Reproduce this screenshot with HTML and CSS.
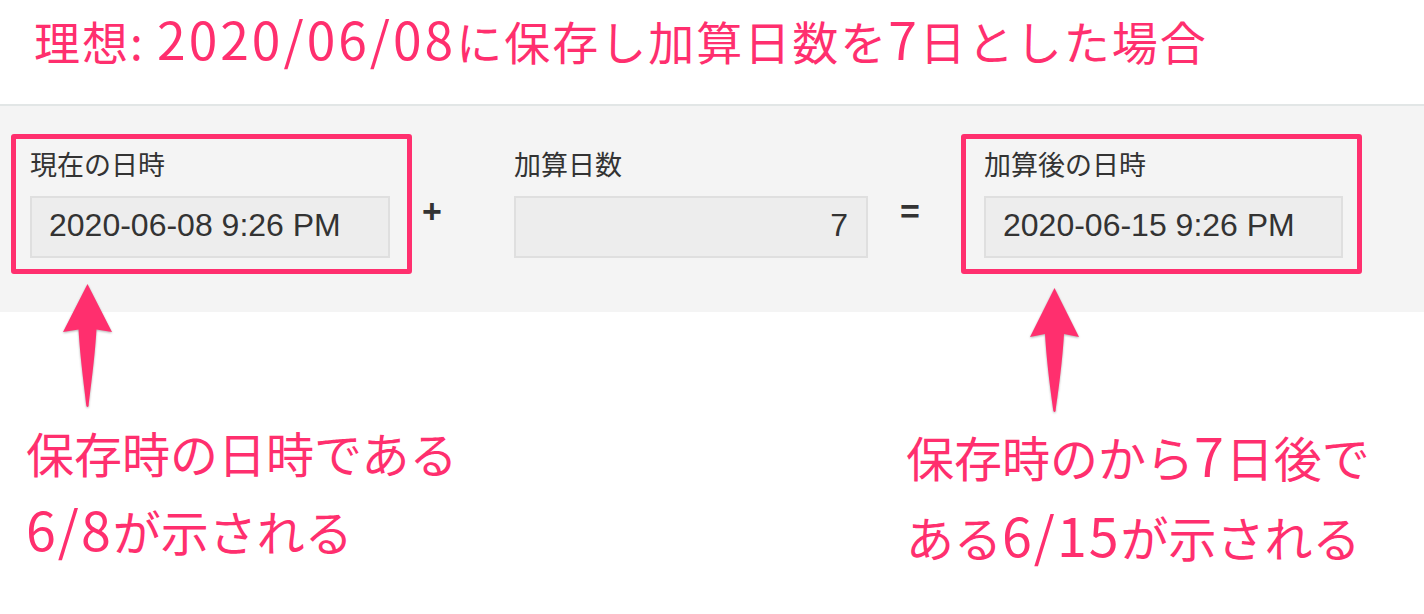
FILE: index.html
```html
<!DOCTYPE html>
<html lang="ja">
<head>
<meta charset="utf-8">
<title>加算日数</title>
<link rel="stylesheet" href="styles.css">
</head>
<body>
<main class="page">
  <h1 class="title">理想: <span class="num">2020/06/08</span>に保存し加算日数を<span class="num">7</span>日とした場合</h1>
  <section class="band">
    <div class="field field--hl field--left">
      <div class="label">現在の日時</div>
      <div class="input input--left">2020-06-08 9:26 PM</div>
    </div>
    <div class="op op--plus">+</div>
    <div class="field field--plain">
      <div class="label">加算日数</div>
      <div class="input input--mid">7</div>
    </div>
    <div class="op op--eq">=</div>
    <div class="field field--hl field--right">
      <div class="label">加算後の日時</div>
      <div class="input input--right">2020-06-15 9:26 PM</div>
    </div>
  </section>
  <section class="notes">
    <p class="note note--left">保存時の日時である<br><span class="num">6/8</span>が示される</p>
    <p class="note note--right">保存時のから<span class="num">7</span>日後で<br>ある<span class="num">6/15</span>が示される</p>
  </section>
  <svg class="arrow arrow--left" width="49" height="124" viewBox="0 0 49 124" aria-hidden="true">
    <path d="M24.5 0 L49 48 L33.5 45.5 C31.5 78 27 108 25.6 122 Q24.5 124 23.4 122 C22 108 17.5 78 15.5 45.5 L0 48 Z"/>
  </svg>
  <svg class="arrow arrow--right" width="49" height="125" viewBox="0 0 49 125" aria-hidden="true">
    <path d="M24.5 0 L49 49 L34 46 C32 79 27.5 109 25.6 123 Q24.5 125 23.4 123 C21.5 109 17 79 15 46 L0 49 Z"/>
  </svg>
</main>
</body>
</html>
```

FILE: styles.css
```css
html, body {
  margin: 0;
  padding: 0;
  background: #ffffff;
}

.page {
  position: relative;
  width: 1424px;
  height: 614px;
  overflow: hidden;
  font-family: "Noto Sans CJK JP", "Noto Sans", sans-serif;
}

.title {
  margin: 0;
  padding: 12px 0 36px 34px;
  height: 56px;
  font-size: 46px;
  line-height: 56px;
  font-weight: normal;
  color: #ff2f6e;
  white-space: nowrap;
  letter-spacing: 2px;
}

.num {
  font-size: 1.12em;
  line-height: 1;
  letter-spacing: 3px;
}

.band {
  display: flex;
  align-items: flex-start;
  box-sizing: border-box;
  height: 208px;
  padding: 28px 0 0 11px;
  background: #f4f4f4;
  border-top: 2px solid #e2e6e6;
}

.field {
  border: 5px solid transparent;
  border-radius: 3px;
  padding-top: 7px;
  padding-bottom: 11px;
}

.field--hl {
  border-color: #ff2f6e;
}

.field--left {
  padding-left: 14px;
  padding-right: 17px;
}

.field--plain {
  padding-left: 0;
  padding-right: 0;
}

.field--right {
  padding-left: 18px;
  padding-right: 14px;
}

.label {
  font-size: 27px;
  line-height: 36px;
  height: 36px;
  color: #333333;
  margin-bottom: 14px;
  white-space: nowrap;
}

.input {
  box-sizing: border-box;
  height: 62px;
  display: flex;
  align-items: center;
  padding: 0 18px 4px 17px;
  background: #ededed;
  border: 2px solid #dfdfdf;
  font-family: "Liberation Sans", Arial, sans-serif;
  font-size: 32px;
  color: #333333;
  white-space: nowrap;
}

.input--left { width: 360px; }
.input--mid { width: 354px; justify-content: flex-end; }
.input--right { width: 359px; }

.op {
  box-sizing: border-box;
  margin-top: 60px;
  font-family: "Liberation Sans", Arial, sans-serif;
  font-weight: bold;
  font-size: 34px;
  line-height: 34px;
  color: #333333;
}

.op--plus {
  width: 97px;
  padding-left: 10px;
}

.op--eq {
  width: 88px;
  padding-left: 27px;
}

.notes {
  display: flex;
  margin-top: 101px;
  padding-left: 26px;
}

.note {
  margin: 0;
  font-size: 48px;
  color: #ff2f6e;
  white-space: nowrap;
}

.note .num {
  letter-spacing: 2px;
}

.note--left {
  width: 880px;
  line-height: 78px;
}

.note--right {
  padding-top: 3px;
  line-height: 80px;
}

.arrow {
  position: absolute;
  fill: #ff2f6e;
  filter: drop-shadow(0 1px 1px rgba(0, 0, 0, 0.3));
}

.arrow--left {
  left: 63px;
  top: 284px;
}

.arrow--right {
  left: 1030px;
  top: 288px;
}
```
